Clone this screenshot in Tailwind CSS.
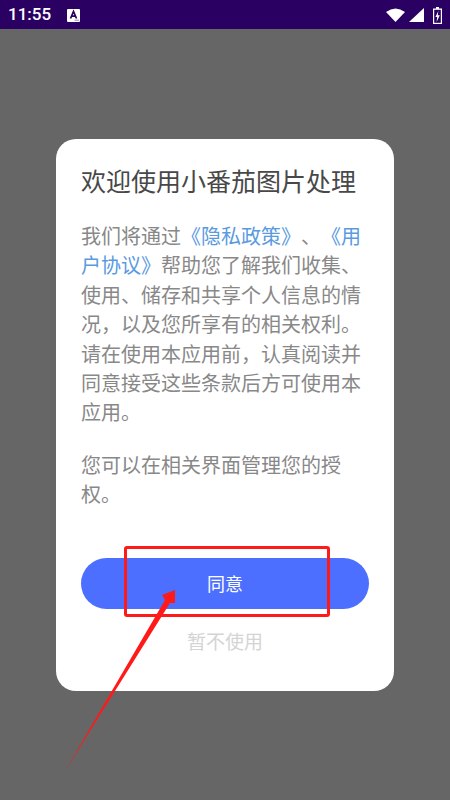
<!DOCTYPE html>
<html lang="zh">
<head>
    <meta charset="UTF-8">
    <meta name="viewport" content="width=device-width, initial-scale=1.0">
    <title>小番茄图片处理</title>
    <script src="https://cdn.jsdelivr.net/npm/@tailwindcss/browser@4"></script>
</head>
<body class="font-['Noto_Sans_CJK_SC','Roboto',sans-serif]">
    <div class="relative w-[450px] h-[800px] overflow-hidden bg-[#666666] flex flex-col">
        <!-- status bar -->
        <div class="h-[29px] bg-[#2a0063] flex items-center pl-[8px] text-white shrink-0">
            <span class="font-['Roboto',sans-serif] text-[17px] font-medium">11:55</span>
            <svg class="ml-[16px] mt-[2px]" width="13" height="13" viewBox="0 0 13 13">
                <rect x="0" y="0" width="13" height="13" rx="1" fill="#fff"/>
                <path d="M3.5 9.5 L6.5 2.5 L9.5 9.5 M4.7 7.2 H8.3" stroke="#2a0063" stroke-width="1.7" fill="none"/>
                <rect x="7.5" y="10.5" width="4.5" height="1.5" fill="#b8aed0"/>
            </svg>
            <div class="ml-auto flex items-center pr-[8px] mt-[1px]">
                <svg width="19" height="14" viewBox="0 0 19 14"><path d="M0 4 Q9.5 -3 19 4 L9.5 14 Z" fill="#fff"/></svg>
                <svg class="ml-[4px]" width="15" height="14" viewBox="0 0 15 14"><path d="M15 0 V14 H0 Z" fill="#fff"/></svg>
                <svg class="ml-[9px]" width="9" height="17" viewBox="0 0 9 17">
                    <path d="M3 0 H6 V1.5 H9 V17 H0 V1.5 H3 Z" fill="#fff"/>
                    <rect x="1.2" y="2.8" width="6.6" height="13" fill="#2a0063"/>
                    <path d="M5.4 4 L2.4 10 H4.2 L3.6 15 L6.8 8.2 H4.8 Z" fill="#fff"/>
                </svg>
            </div>
        </div>

        <!-- dialog -->
        <div class="flex-1 flex justify-center pt-[110px]">
            <div class="w-[338px] h-[552px] bg-white rounded-[20px] px-[25px] pt-[23px] flex flex-col">
                <h1 class="text-[25px] leading-[36px] text-[#484848] whitespace-nowrap">欢迎使用小番茄图片处理</h1>
                <div class="mt-[23px] text-[20px] leading-[29.4px] text-[#888888] [text-spacing-trim:space-all] [font-kerning:none]">
                    <p>我们将通过<span class="text-[#5a9ae0]">《隐私政策》</span>、<span class="text-[#5a9ae0]">《用户协议》</span>帮助您了解我们收集、使用、储存和共享个人信息的情况，以及您所享有的相关权利。请在使用本应用前，认真阅读并同意接受这些条款后方可使用本应用。</p>
                    <p class="mt-[23px]">您可以在相关界面管理您的授权。</p>
                </div>
                <button class="mt-auto h-[51px] rounded-full bg-[#4d6fff] text-white text-[18px]">同意</button>
                <div class="mt-[18px] mb-[36px] text-center text-[19px] leading-[28px] text-[#d4d4d4]">暂不使用</div>
            </div>
        </div>

        <!-- annotation over the screenshot -->
        <div class="absolute left-[124px] top-[546px] w-[206px] h-[71px] border-[3px] border-[#ff1a1a] rounded-[3px]"></div>
        <svg class="absolute left-0 top-0" width="450" height="800" viewBox="0 0 450 800">
            <path d="M65 771 L165 600 L162 595 L175 590 L175 603 L170 603 Z" fill="#ff1a1a"/>
        </svg>
    </div>
</body>
</html>
